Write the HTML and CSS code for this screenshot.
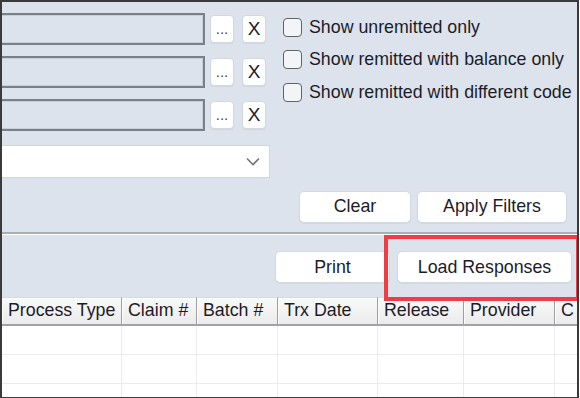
FILE: index.html
```html
<!DOCTYPE html>
<html>
<head>
<meta charset="utf-8">
<link rel="stylesheet" href="styles.css">
</head>
<body>
<div class="window">
  <section class="filters">
    <div class="left-col">
      <div class="field-row">
        <div class="field"></div>
        <button class="mini dots">...</button>
        <button class="mini">X</button>
      </div>
      <div class="field-row">
        <div class="field"></div>
        <button class="mini dots">...</button>
        <button class="mini">X</button>
      </div>
      <div class="field-row">
        <div class="field"></div>
        <button class="mini dots">...</button>
        <button class="mini">X</button>
      </div>
      <div class="select">
        <svg class="chev" width="14" height="9" viewBox="0 0 14 9"><path d="M1 1.5 L7 7.5 L13 1.5" fill="none" stroke="#6f7378" stroke-width="1.6"/></svg>
      </div>
    </div>
    <div class="right-col">
      <label class="check"><span class="box"></span>Show unremitted only</label>
      <label class="check"><span class="box"></span>Show remitted with balance only</label>
      <label class="check"><span class="box"></span>Show remitted with different code</label>
      <div class="filter-actions">
        <button class="btn clear">Clear</button>
        <button class="btn apply">Apply Filters</button>
      </div>
    </div>
  </section>
  <section class="toolbar">
    <button class="btn print">Print</button>
    <button class="btn load">Load Responses</button>
    <div class="highlight"></div>
  </section>
  <section class="grid">
    <div class="row head">
      <div class="cell c1">Process Type</div>
      <div class="cell c2">Claim #</div>
      <div class="cell c3">Batch #</div>
      <div class="cell c4">Trx Date</div>
      <div class="cell c5">Release</div>
      <div class="cell c6">Provider</div>
      <div class="cell c7">C</div>
    </div>
    <div class="row body">
      <div class="cell c1"></div><div class="cell c2"></div><div class="cell c3"></div><div class="cell c4"></div><div class="cell c5"></div><div class="cell c6"></div><div class="cell c7"></div>
    </div>
    <div class="row body">
      <div class="cell c1"></div><div class="cell c2"></div><div class="cell c3"></div><div class="cell c4"></div><div class="cell c5"></div><div class="cell c6"></div><div class="cell c7"></div>
    </div>
    <div class="row body">
      <div class="cell c1"></div><div class="cell c2"></div><div class="cell c3"></div><div class="cell c4"></div><div class="cell c5"></div><div class="cell c6"></div><div class="cell c7"></div>
    </div>
  </section>
</div>
</body>
</html>
```

FILE: styles.css
```css
* { box-sizing: border-box; }
html, body { margin: 0; padding: 0; background: #ffffff; }
body {
  font-family: "Liberation Sans", Arial, sans-serif;
  font-size: 17.8px;
  color: #1c1c28;
}
.window {
  width: 579px;
  height: 398px;
  border: 2px solid #3a3a3a;
  border-bottom-width: 1px;
  overflow: hidden;
  display: flex;
  flex-direction: column;
  background: #ffffff;
  position: relative;
}
.filters {
  flex: none;
  height: 232px;
  background: #dce3ec;
  display: flex;
  border-bottom: 2px solid #a7afb9;
  overflow: hidden;
}
.left-col {
  width: 280px;
  padding-top: 11px;
  margin-left: -10px;
  display: flex;
  flex-direction: column;
}
.field-row {
  display: flex;
  align-items: center;
  height: 32px;
  margin-bottom: 11px;
}
.field {
  width: 213px;
  height: 32px;
  border: 2px solid #7b8088;
  box-shadow: inset 0 0 0 1px #c7ced7;
  background: #dce3ec;
}
button {
  font-family: inherit;
  font-size: inherit;
  color: inherit;
  padding: 0;
  cursor: default;
}
.mini {
  width: 24px;
  height: 28px;
  margin-left: 5px;
  background: #ffffff;
  border: 1px solid #d3d8de;
  border-radius: 4px;
  box-shadow: 0 1px 1px rgba(0,0,0,0.06);
  font-size: 19px;
  line-height: 26px;
}
.mini + .mini { margin-left: 8px; }
.mini.dots {
  font-size: 15px;
  line-height: 26px;
  color: #4a3a72;
  letter-spacing: 0;
}
.select {
  margin-top: 3px;
  width: 278px;
  height: 33px;
  background: #ffffff;
  border: 1px solid #d0d5db;
  display: flex;
  align-items: center;
  justify-content: flex-end;
  padding-right: 9px;
}
.right-col {
  flex: 1;
  padding-top: 9px;
  padding-left: 11px;
  display: flex;
  flex-direction: column;
}
.check {
  display: flex;
  align-items: center;
  height: 32.5px;
  white-space: nowrap;
}
.box {
  width: 19px;
  height: 19px;
  border: 1.5px solid #5f6266;
  border-radius: 4px;
  background: #f3f4f6;
  margin-right: 7px;
  flex: none;
}
.filter-actions {
  margin-top: 82px;
  display: flex;
  justify-content: flex-end;
  gap: 6px;
  padding-right: 10px;
}
.btn {
  height: 32px;
  background: #ffffff;
  border: 1px solid #d4d9df;
  border-radius: 5px;
  box-shadow: 0 1px 1px rgba(0,0,0,0.05);
}
.clear { width: 112px; }
.apply { width: 150px; }
.toolbar {
  flex: none;
  border-top: 1px solid #ffffff;
  height: 63px;
  background: #dce3ec;
  display: flex;
  justify-content: flex-end;
  align-items: center;
  gap: 7px;
  padding-right: 5px;
  padding-top: 2px;
  position: relative;
}
.print { width: 115px; }
.load { width: 175px; }
.highlight {
  position: absolute;
  left: 382px;
  top: 0px;
  width: 196px;
  height: 66px;
  border: 4px solid #f23b43;
  z-index: 2;
}
.grid {
  flex: 1;
  display: flex;
  flex-direction: column;
}
.row { display: flex; flex: none; }
.row.head { height: 29px; }
.row.body { height: 29px; }
.cell { flex: none; }
.c1 { width: 120px; }
.c2 { width: 75px; }
.c3 { width: 81px; }
.c4 { width: 100px; }
.c5 { width: 86px; }
.c6 { width: 91px; }
.c7 { width: 40px; }
.head .cell {
  background: linear-gradient(#f9f9f9, #ebebeb);
  border-right: 1px solid #9c9ea2;
  border-bottom: 2px solid #a0a3a8;
  border-top: 1px solid #d7d9dc;
  box-shadow: inset 1px 1px 0 #ffffff;
  padding-left: 6px;
  line-height: 25px;
  white-space: nowrap;
  overflow: hidden;
}
.body .cell {
  border-right: 1px solid #ececec;
  border-bottom: 1px solid #ececec;
}
```
